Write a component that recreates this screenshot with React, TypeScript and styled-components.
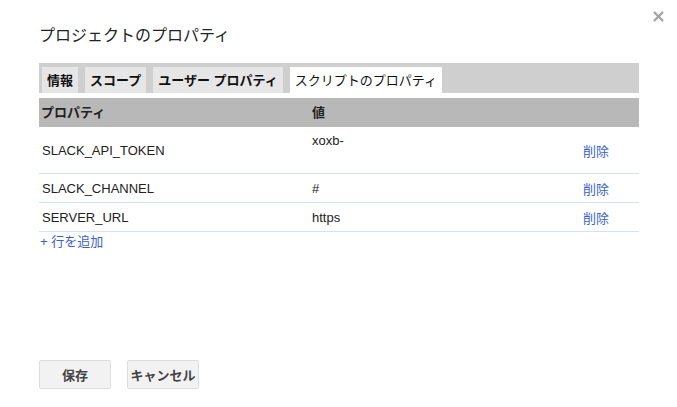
import React from "react";
import styled, { createGlobalStyle } from "styled-components";

const Global = createGlobalStyle`
  html, body { margin: 0; padding: 0; background: #fff; }
  body { font-family: "Liberation Sans", Arial, "Noto Sans CJK JP", sans-serif; color: #222; }
`;

const Dialog = styled.div`
  position: relative;
  box-sizing: border-box;
  width: 677px;
  height: 407px;
  padding: 0 38px 18px 39px;
  display: flex;
  flex-direction: column;
`;

const Close = styled.button`
  position: absolute;
  top: 9px;
  right: 12px;
  width: 14px;
  height: 14px;
  padding: 0;
  border: 0;
  background: transparent;
  display: flex;
  align-items: center;
  justify-content: center;
`;

const Title = styled.h1`
  margin: 25px 0 0;
  font-size: 16px;
  font-weight: normal;
  line-height: 22px;
  color: #222;
`;

const TabBar = styled.div`
  margin-top: 16px;
  height: 30px;
  box-sizing: border-box;
  background: #cfcfcf;
  padding: 4px 3px 0;
  display: flex;
  align-items: flex-end;
  gap: 7px;
`;

const Tab = styled.div<{ $active?: boolean }>`
  height: 26px;
  line-height: 28px;
  padding: 0 5px;
  background: ${(p) => (p.$active ? "#fff" : "#e6e6e6")};
  font-size: 13px;
  font-weight: ${(p) => (p.$active ? "normal" : "bold")};
  color: #111;
  white-space: nowrap;
`;

const Table = styled.div`
  margin-top: 5px;
  width: 600px;
  display: grid;
  grid-template-columns: 273px 271px 56px;
`;

const HeadCell = styled.div`
  height: 29px;
  line-height: 29px;
  background: #b8b8b8;
  font-size: 13px;
  font-weight: bold;
  padding-left: ${(p: { $first?: boolean }) => (p.$first ? "2px" : "0")};
`;

const Cell = styled.div<{ $tall?: boolean; $top?: boolean; $first?: boolean }>`
  box-sizing: border-box;
  height: ${(p) => (p.$tall ? "47px" : "29px")};
  border-bottom: 1px solid #d3e2f4;
  font-size: 13px;
  display: flex;
  align-items: ${(p) => (p.$top ? "flex-start" : "center")};
  padding-top: ${(p) => (p.$top ? "6px" : "0")};
  padding-left: ${(p) => (p.$first ? "3px" : "0")};
  color: #222;
`;

const Link = styled.a`
  color: #3a5fcd;
  font-size: 13px;
  text-decoration: none;
  cursor: pointer;
`;

const AddRow = styled(Link)`
  margin-top: 2px;
  display: block;
  line-height: 16px;
  padding-left: 1px;
`;

const Footer = styled.div`
  margin-top: auto;
  display: flex;
  gap: 16px;
`;

const Button = styled.button`
  box-sizing: border-box;
  width: 72px;
  height: 29px;
  border: 1px solid #dcdcdc;
  border-radius: 2px;
  background: #f2f2f2;
  font-family: inherit;
  font-size: 13px;
  font-weight: bold;
  color: #444;
  padding: 0;
`;

const rows = [
  { name: "SLACK_API_TOKEN", value: "xoxb-", tall: true },
  { name: "SLACK_CHANNEL", value: "#" },
  { name: "SERVER_URL", value: "https" },
];

export default function App() {
  return (
    <>
      <Global />
      <Dialog>
        <Close aria-label="閉じる">
          <svg width="11" height="11" viewBox="0 0 11 11">
            <path d="M1 1 L10 10 M10 1 L1 10" stroke="#a3a3a3" strokeWidth="2.4" />
          </svg>
        </Close>
        <Title>プロジェクトのプロパティ</Title>
        <TabBar>
          <Tab>情報</Tab>
          <Tab>スコープ</Tab>
          <Tab>ユーザー プロパティ</Tab>
          <Tab $active>スクリプトのプロパティ</Tab>
        </TabBar>
        <Table>
          <HeadCell $first>プロパティ</HeadCell>
          <HeadCell>値</HeadCell>
          <HeadCell />
          {rows.map((r) => (
            <React.Fragment key={r.name}>
              <Cell $tall={r.tall} $first>{r.name}</Cell>
              <Cell $tall={r.tall} $top={r.tall}>{r.value}</Cell>
              <Cell $tall={r.tall}>
                <Link>削除</Link>
              </Cell>
            </React.Fragment>
          ))}
        </Table>
        <AddRow>+ 行を追加</AddRow>
        <Footer>
          <Button>保存</Button>
          <Button>キャンセル</Button>
        </Footer>
      </Dialog>
    </>
  );
}
